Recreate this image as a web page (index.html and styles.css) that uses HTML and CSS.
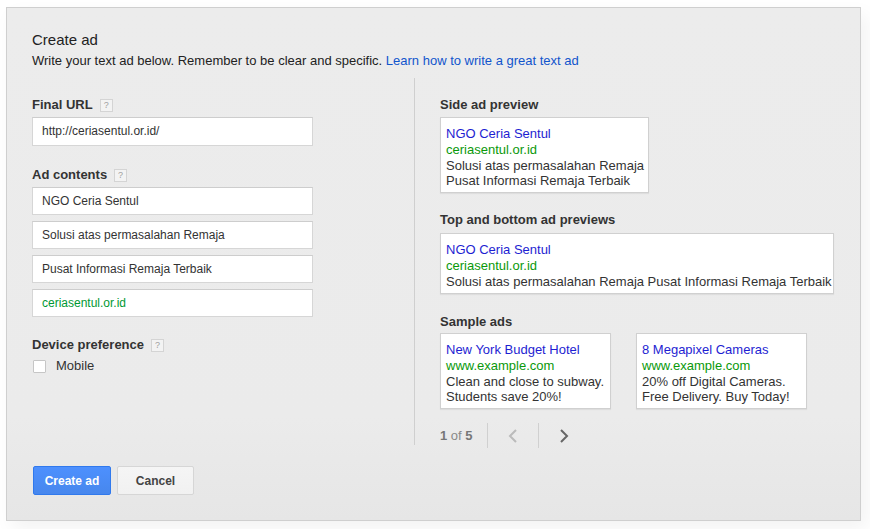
FILE: index.html
```html
<!DOCTYPE html>
<html>
<head>
<meta charset="utf-8">
<link rel="stylesheet" href="styles.css">
</head>
<body>
<div class="panel">
  <div class="header">
    <div class="title">Create ad</div>
    <div class="subtitle">Write your text ad below. Remember to be clear and specific. <a class="link" href="#">Learn how to write a great text ad</a></div>
  </div>
  <div class="columns">
    <div class="left">
      <div class="label">Final URL <span class="help">?</span></div>
      <div class="input">http://ceriasentul.or.id/</div>
      <div class="label label-gap">Ad contents <span class="help">?</span></div>
      <div class="input-list">
        <div class="input">NGO Ceria Sentul</div>
        <div class="input">Solusi atas permasalahan Remaja</div>
        <div class="input">Pusat Informasi Remaja Terbaik</div>
        <div class="input green">ceriasentul.or.id</div>
      </div>
      <div class="label label-gap-sm">Device preference <span class="help">?</span></div>
      <label class="check-row"><span class="checkbox"></span>Mobile</label>
    </div>
    <div class="right">
      <div class="rlabel">Side ad preview</div>
      <div class="ad side-ad">
        <div class="ad-title">NGO Ceria Sentul</div>
        <div class="ad-url">ceriasentul.or.id</div>
        <div class="ad-desc">Solusi atas permasalahan Remaja</div>
        <div class="ad-desc">Pusat Informasi Remaja Terbaik</div>
      </div>
      <div class="rlabel rlabel-gap">Top and bottom ad previews</div>
      <div class="ad top-ad">
        <div class="ad-title">NGO Ceria Sentul</div>
        <div class="ad-url">ceriasentul.or.id</div>
        <div class="ad-desc">Solusi atas permasalahan Remaja Pusat Informasi Remaja Terbaik</div>
      </div>
      <div class="rlabel rlabel-gap2">Sample ads</div>
      <div class="samples">
        <div class="ad sample-ad">
          <div class="ad-title">New York Budget Hotel</div>
          <div class="ad-url">www.example.com</div>
          <div class="ad-desc">Clean and close to subway.</div>
          <div class="ad-desc">Students save 20%!</div>
        </div>
        <div class="ad sample-ad">
          <div class="ad-title">8 Megapixel Cameras</div>
          <div class="ad-url">www.example.com</div>
          <div class="ad-desc">20% off Digital Cameras.</div>
          <div class="ad-desc">Free Delivery. Buy Today!</div>
        </div>
      </div>
      <div class="pager">
        <div class="count"><b>1</b> of <b>5</b></div>
        <div class="pager-btn">
          <svg width="10" height="16" viewBox="0 0 10 16"><polyline points="8,2 2,8 8,14" fill="none" stroke="#bbb" stroke-width="2"/></svg>
        </div>
        <div class="pager-btn">
          <svg width="10" height="16" viewBox="0 0 10 16"><polyline points="2,2 8,8 2,14" fill="none" stroke="#666" stroke-width="2"/></svg>
        </div>
      </div>
    </div>
  </div>
  <div class="buttons">
    <button class="btn primary">Create ad</button>
    <button class="btn secondary">Cancel</button>
  </div>
</div>
</body>
</html>
```
FILE: styles.css
```css
html, body {
  margin: 0;
  padding: 0;
  background: #fff;
}
body {
  font-family: "Liberation Sans", Arial, sans-serif;
  color: #222;
  width: 870px;
  height: 529px;
  overflow: hidden;
}
.panel {
  margin: 7px 0 0 6px;
  width: 802px;
  height: 464px;
  padding: 23px 26px 25px 25px;
  border: 1px solid #cfcfcf;
  background: linear-gradient(#ececec, #ebebeb 80%, #e6e6e6);
  box-shadow: 6px 8px 18px rgba(0,0,0,0.05);
}
.title {
  font-size: 15px;
  line-height: 18px;
  color: #222;
}
.subtitle {
  margin-top: 4px;
  font-size: 13px;
  line-height: 16px;
  color: #222;
}
.link {
  color: #15c;
  text-decoration: none;
}
.columns {
  display: flex;
  margin-top: 9px;
  height: 367px;
}
.left {
  flex: 0 0 382px;
  padding-top: 19px;
}
.label {
  display: flex;
  align-items: center;
  font-size: 13px;
  font-weight: bold;
  line-height: 16px;
  color: #333;
}
.label-gap {
  margin-top: 21px;
}
.label-gap-sm {
  margin-top: 20px;
}
.help {
  display: inline-flex;
  align-items: center;
  justify-content: center;
  width: 11px;
  height: 11px;
  margin-left: 7px;
  border: 1px solid #d4d4d4;
  background: #f3f3f3;
  color: #a0a0a0;
  font-size: 9px;
  font-weight: normal;
  line-height: 11px;
}
.input {
  box-sizing: border-box;
  width: 281px;
  height: 29px;
  margin-top: 4px;
  padding-left: 9px;
  border: 1px solid #d6d6d6;
  border-top-color: #cdcdcd;
  background: #fff;
  font-size: 12px;
  line-height: 27px;
  color: #333;
}
.input-list .input {
  height: 28px;
  line-height: 26px;
  margin-top: 6px;
}
.input-list .input:first-child {
  margin-top: 4px;
}
.input.green {
  color: #093;
}
.check-row {
  display: flex;
  align-items: center;
  margin-top: 5px;
  font-size: 13px;
  line-height: 16px;
  color: #333;
}
.checkbox {
  box-sizing: border-box;
  width: 13px;
  height: 13px;
  margin: 0 10px 0 1px;
  border: 1px solid #c6c6c6;
  border-radius: 1px;
  background: #fff;
}
.right {
  flex: 1;
  border-left: 1px solid #cfcfcf;
  padding: 19px 0 0 25px;
}
.rlabel {
  font-size: 13px;
  font-weight: bold;
  line-height: 16px;
  color: #333;
}
.rlabel-gap {
  margin-top: 19px;
}
.rlabel-gap2 {
  margin-top: 20px;
}
.ad {
  box-sizing: border-box;
  margin-top: 4px;
  padding: 7px 4px 4px 5px;
  border: 1px solid #d0d0d0;
  background: #fff;
  box-shadow: 0 1px 1px rgba(0,0,0,0.06);
  font-size: 13px;
  white-space: nowrap;
}
.side-ad {
  width: 209px;
}
.top-ad {
  width: 394px;
  margin-top: 5px;
}
.ad-title {
  color: #1e1ed2;
  line-height: 17px;
}
.ad-url {
  color: #0a990a;
  line-height: 16px;
}
.ad-desc {
  color: #333;
  line-height: 15px;
}
.samples {
  display: flex;
  gap: 25px;
  margin-top: 3px;
}
.sample-ad {
  width: 171px;
  margin-top: 0;
}
.pager {
  display: flex;
  align-items: center;
  margin-top: 14px;
  height: 25px;
}
.count {
  width: 47px;
  font-size: 13px;
  color: #888;
}
.count b {
  color: #777;
}
.pager-btn {
  display: flex;
  align-items: center;
  justify-content: center;
  width: 50px;
  height: 25px;
  border-left: 1px solid #d0d0d0;
}
.buttons {
  display: flex;
  gap: 6px;
  margin-top: 21px;
  padding-left: 1px;
}
.btn {
  box-sizing: border-box;
  height: 29px;
  border-radius: 2px;
  font-family: "Liberation Sans", Arial, sans-serif;
  font-size: 12px;
  font-weight: bold;
  cursor: pointer;
}
.primary {
  width: 78px;
  border: 1px solid #3079ed;
  background: linear-gradient(#4d90fe, #4787ed);
  color: #fff;
}
.secondary {
  width: 77px;
  border: 1px solid #d6d6d6;
  background: linear-gradient(#f5f5f5, #f1f1f1);
  color: #444;
}
```
